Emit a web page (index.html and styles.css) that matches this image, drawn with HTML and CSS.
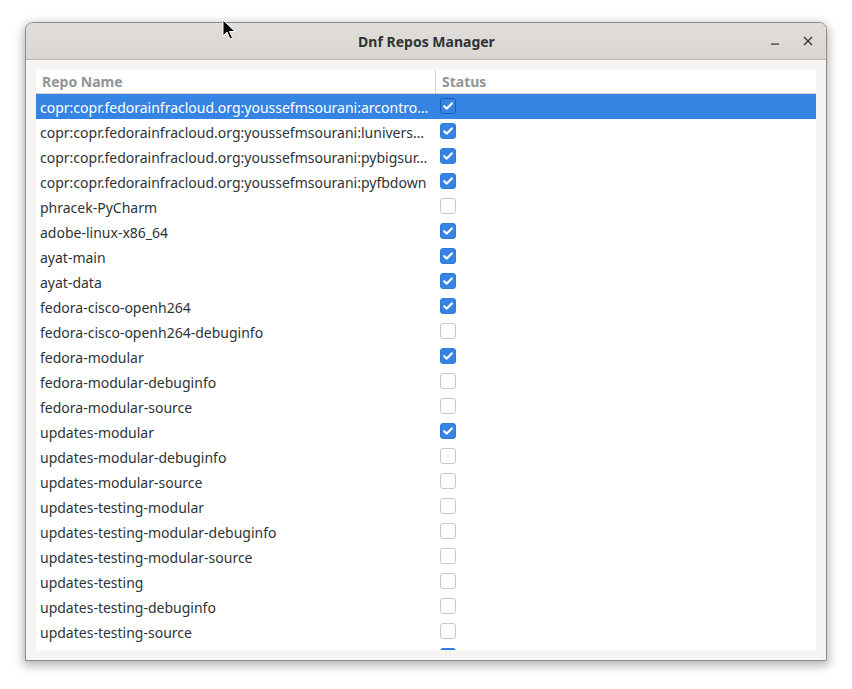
FILE: index.html
```html
<!DOCTYPE html>
<html>
<head>
<meta charset="utf-8">
<link rel="stylesheet" href="styles.css">
</head>
<body>
<div class="desktop">
  <div class="window">
    <div class="headerbar">
      <div class="title">Dnf Repos Manager</div>
      <div class="controls">
        <span class="ctl"><svg width="16" height="16" viewBox="0 0 16 16"><rect x="4" y="10.5" width="8" height="1.2" fill="#2e3436"/></svg></span>
        <span class="ctl"><svg width="16" height="16" viewBox="0 0 16 16"><path d="M4 4 L12 12 M12 4 L4 12" stroke="#2e3436" stroke-width="1.3" fill="none"/></svg></span>
      </div>
    </div>
    <div class="content">
      <div class="tree">
        <div class="thead">
          <div class="th name">Repo Name</div>
          <div class="th status">Status</div>
        </div>
        <div class="rows">
          <div class="row selected"><div class="cell name">copr:copr.fedorainfracloud.org:youssefmsourani:arcontro…</div><div class="cell status"><span class="cb on"></span></div></div>
          <div class="row"><div class="cell name">copr:copr.fedorainfracloud.org:youssefmsourani:lunivers…</div><div class="cell status"><span class="cb on"></span></div></div>
          <div class="row"><div class="cell name">copr:copr.fedorainfracloud.org:youssefmsourani:pybigsur…</div><div class="cell status"><span class="cb on"></span></div></div>
          <div class="row"><div class="cell name">copr:copr.fedorainfracloud.org:youssefmsourani:pyfbdown</div><div class="cell status"><span class="cb on"></span></div></div>
          <div class="row"><div class="cell name">phracek-PyCharm</div><div class="cell status"><span class="cb"></span></div></div>
          <div class="row"><div class="cell name">adobe-linux-x86_64</div><div class="cell status"><span class="cb on"></span></div></div>
          <div class="row"><div class="cell name">ayat-main</div><div class="cell status"><span class="cb on"></span></div></div>
          <div class="row"><div class="cell name">ayat-data</div><div class="cell status"><span class="cb on"></span></div></div>
          <div class="row"><div class="cell name">fedora-cisco-openh264</div><div class="cell status"><span class="cb on"></span></div></div>
          <div class="row"><div class="cell name">fedora-cisco-openh264-debuginfo</div><div class="cell status"><span class="cb"></span></div></div>
          <div class="row"><div class="cell name">fedora-modular</div><div class="cell status"><span class="cb on"></span></div></div>
          <div class="row"><div class="cell name">fedora-modular-debuginfo</div><div class="cell status"><span class="cb"></span></div></div>
          <div class="row"><div class="cell name">fedora-modular-source</div><div class="cell status"><span class="cb"></span></div></div>
          <div class="row"><div class="cell name">updates-modular</div><div class="cell status"><span class="cb on"></span></div></div>
          <div class="row"><div class="cell name">updates-modular-debuginfo</div><div class="cell status"><span class="cb"></span></div></div>
          <div class="row"><div class="cell name">updates-modular-source</div><div class="cell status"><span class="cb"></span></div></div>
          <div class="row"><div class="cell name">updates-testing-modular</div><div class="cell status"><span class="cb"></span></div></div>
          <div class="row"><div class="cell name">updates-testing-modular-debuginfo</div><div class="cell status"><span class="cb"></span></div></div>
          <div class="row"><div class="cell name">updates-testing-modular-source</div><div class="cell status"><span class="cb"></span></div></div>
          <div class="row"><div class="cell name">updates-testing</div><div class="cell status"><span class="cb"></span></div></div>
          <div class="row"><div class="cell name">updates-testing-debuginfo</div><div class="cell status"><span class="cb"></span></div></div>
          <div class="row"><div class="cell name">updates-testing-source</div><div class="cell status"><span class="cb"></span></div></div>
          <div class="row"><div class="cell name"></div><div class="cell status"><span class="cb on"></span></div></div>
        </div>
      </div>
    </div>
  </div>
  <svg class="cursor" width="14" height="22" viewBox="0 0 14 22"><path d="M1 1 L1 17 L5 13 L8 20 L10.5 19 L7.5 12.5 L13 12.5 Z" fill="#000" stroke="#fff" stroke-width="1" stroke-linejoin="round"/></svg>
</div>
</body>
</html>
```
FILE: styles.css
```css
* { box-sizing: border-box; }
html, body { margin: 0; padding: 0; background: #ffffff; }
body {
  font-family: "Noto Sans", "Open Sans", sans-serif;
  font-size: 14px;
  color: #2e3436;
  width: 852px;
  height: 689px;
  overflow: hidden;
}
.desktop {
  position: relative;
  width: 852px;
  height: 689px;
  padding: 22px 0 0 25px;
}
.window {
  width: 802px;
  height: 639px;
  border: 1px solid #8e8c8a;
  border-radius: 8px 8px 0 0;
  background: #f6f5f4;
  box-shadow: 0 3px 10px 2px rgba(0,0,0,0.28);
  display: flex;
  flex-direction: column;
  overflow: hidden;
}
.headerbar {
  position: relative;
  height: 37px;
  flex: none;
  background: linear-gradient(#e1dedb, #dad6d2);
  border-bottom: 1px solid #bfb8b1;
  display: flex;
  align-items: center;
  justify-content: center;
}
.title {
  font-weight: bold;
  font-size: 14px;
  color: #2e3436;
  padding-left: 1px;
}
.controls {
  position: absolute;
  right: 10px;
  top: 0;
  height: 36px;
  display: flex;
  align-items: center;
  gap: 17px;
}
.ctl { display: flex; width: 16px; height: 16px; }
.content {
  flex: 1;
  min-height: 0;
  padding: 10px;
  display: flex;
}
.tree {
  flex: 1;
  min-height: 0;
  background: #ffffff;
  overflow: hidden;
  display: flex;
  flex-direction: column;
}
.thead {
  display: flex;
  height: 24px;
  flex: none;
  border-bottom: 1px solid #d6d1cd;
}
.th {
  font-weight: bold;
  color: #929595;
  font-size: 14px;
  line-height: 23px;
}
.th.name {
  width: 400px;
  padding-left: 6px;
  border-right: 1px solid #d6d1cd;
}
.th.status { padding-left: 6px; }
.rows { display: flex; flex-direction: column; flex: none; }
.row {
  display: flex;
  height: 25px;
  flex: none;
  align-items: center;
}
.row.selected { background: #3584e4; color: #ffffff; }
.cell.name {
  width: 400px;
  padding-left: 4px;
  padding-right: 2px;
  padding-top: 1px;
  white-space: nowrap;
  overflow: hidden;
  text-overflow: ellipsis;
}
.cell.status {
  padding-left: 4px;
  padding-top: 4px;
  align-self: stretch;
  display: flex;
  align-items: flex-start;
}
.cb {
  display: block;
  width: 16px;
  height: 16px;
  border: 1px solid #cdc7c2;
  border-radius: 3px;
  background: #ffffff;
}
.cb.on {
  border-color: #2f7ad8;
  background: #3584e4 url("data:image/svg+xml;utf8,<svg xmlns='http://www.w3.org/2000/svg' width='14' height='14' viewBox='0 0 14 14'><path d='M3.2 7.2 L5.8 9.6 L10.8 4.4' stroke='white' stroke-width='2.2' fill='none' stroke-linecap='round' stroke-linejoin='round'/></svg>") center / 14px 14px no-repeat;
}
.row.selected .cb.on { border-color: #1a5fb4; }
.cursor {
  position: absolute;
  left: 222px;
  top: 19px;
}
```
